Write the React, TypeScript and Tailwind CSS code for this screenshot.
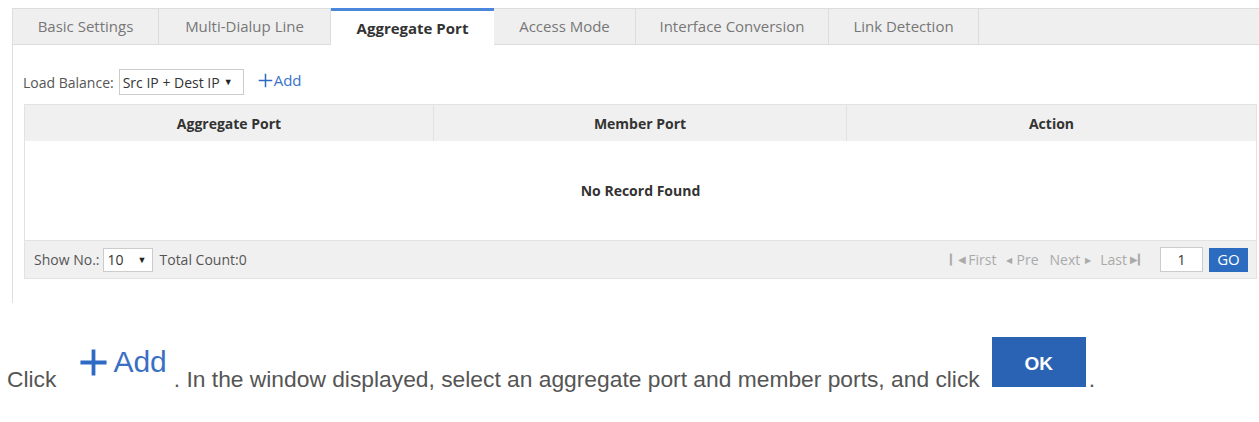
import React from "react";

const ui = { fontFamily: '"Open Sans", "Noto Sans", sans-serif' };
const doc = { fontFamily: '"Liberation Sans", Arial, sans-serif' };

function Plus({ size, stroke }: { size: number; stroke: number }) {
  return (
    <svg width={size} height={size} viewBox="0 0 20 20" className="shrink-0">
      <path d="M10 1V19M1 10H19" stroke="#2f6ac4" strokeWidth={stroke} fill="none" />
    </svg>
  );
}

const tabs = [
  { label: "Basic Settings", w: "w-[146px]" },
  { label: "Multi-Dialup Line", w: "w-[172px]" },
  { label: "Aggregate Port", w: "w-[163px]", active: true },
  { label: "Access Mode", w: "w-[142px]" },
  { label: "Interface Conversion", w: "w-[193px]" },
  { label: "Link Detection", w: "w-[150px]" },
];

export default function App() {
  return (
    <div className="w-[1259px] h-[422px] bg-white overflow-hidden" style={ui}>
      {/* Panel */}
      <div className="ml-[12px] mt-[8px] h-[295px] border-l border-[#dedede]">
        {/* Tab bar */}
        <div className="flex h-[37px] bg-[#efefef] border-t border-b border-[#dcdcdc]">
          {tabs.map((t) =>
            t.active ? (
              <div
                key={t.label}
                className={`${t.w} -mt-px -mb-px h-[37px] bg-white border-t-[3px] border-[#4a86da] flex items-center justify-center text-[15px] font-bold text-[#333]`}
              >
                {t.label}
              </div>
            ) : (
              <div
                key={t.label}
                className={`${t.w} border-r border-[#dcdcdc] flex items-center justify-center text-[15px] text-[#777]`}
              >
                {t.label}
              </div>
            )
          )}
        </div>

        {/* Content */}
        <div className="pl-[10px] pr-[3px]">
          <div className="flex items-center h-[26px] mt-[24px] text-[14px] text-[#555]">
            <span>Load Balance:</span>
            <div className="ml-[5px] h-[26px] w-[125px] border border-[#ccc] bg-white flex items-center pl-[3px] text-[#333]">
              <span>Src IP + Dest IP</span>
              <span className="ml-[4px] text-[9px] text-[#222]">▼</span>
            </div>
            <div className="ml-[14px] flex items-center text-[#3a72c8] text-[15px] -mt-[4px]">
              <Plus size={15} stroke={2} />
              <span className="ml-[1px]">Add</span>
            </div>
          </div>

          {/* Table */}
          <div className="ml-[1px] mt-[9px] border border-[#e2e2e2] w-[1233px]">
            <div className="grid grid-cols-[409px_413px_1fr] h-[36px] bg-[#f0f0f0] text-[14px] font-bold text-[#333]">
              <div className="flex items-center justify-center border-r border-[#e2e2e2]">Aggregate Port</div>
              <div className="flex items-center justify-center border-r border-[#e2e2e2]">Member Port</div>
              <div className="flex items-center justify-center">Action</div>
            </div>
            <div className="h-[99px] bg-white flex items-center justify-center text-[14px] font-bold text-[#333]">
              No Record Found
            </div>
            <div className="h-[38px] bg-[#f0f0f0] border-t border-[#e2e2e2] flex items-center pl-[9px] pr-[8px] text-[14px] text-[#555]">
              <span>Show No.:</span>
              <div className="ml-[3px] h-[24px] w-[50px] border border-[#ccc] bg-white flex items-center pl-[4px] text-[#333]">
                <span>10</span>
                <span className="ml-[14px] text-[9px] text-[#222]">▼</span>
              </div>
              <span className="ml-[7px]">Total Count:0</span>
              <div className="ml-auto flex items-center text-[#aaa] text-[14px]">
                <span className="text-[10px] mr-[2px]">▎◀</span>
                <span>First</span>
                <span className="ml-[9px] text-[8px] mr-[5px]">◀</span>
                <span>Pre</span>
                <span className="ml-[11px]">Next</span>
                <span className="ml-[5px] text-[8px]">▶</span>
                <span className="ml-[9px]">Last</span>
                <span className="ml-[3px] text-[10px]">▶▎</span>
                <div className="ml-[14px] h-[25px] w-[43px] border border-[#ccc] bg-white flex items-center justify-center text-[#333]">
                  1
                </div>
                <div className="ml-[6px] h-[24px] w-[39px] bg-[#2b6cc0] text-white flex items-center justify-center text-[15px]">
                  GO
                </div>
              </div>
            </div>
          </div>
        </div>
      </div>

      {/* Instruction paragraph */}
      <div className="flex items-start mt-[34px] text-[22.8px] text-[#555]" style={doc}>
        <span className="ml-[7px] mt-[29px] leading-[26px]">Click</span>
        <span className="ml-[23px] mt-[9px] flex items-center text-[#3b6fc4]">
          <Plus size={29} stroke={2.6} />
          <span className="ml-[5px] text-[30px] leading-[32px]">Add</span>
        </span>
        <span className="ml-[7px] mt-[29px] leading-[26px]">
          . In the window displayed, select an aggregate port and member ports, and click
        </span>
        <span className="ml-[12px] h-[50px] w-[94px] bg-[#2a63b3] text-white font-bold text-[19px] flex items-start justify-center pt-[13px]">
          OK
        </span>
        <span className="ml-[3px] mt-[29px] leading-[26px]">.</span>
      </div>
    </div>
  );
}
